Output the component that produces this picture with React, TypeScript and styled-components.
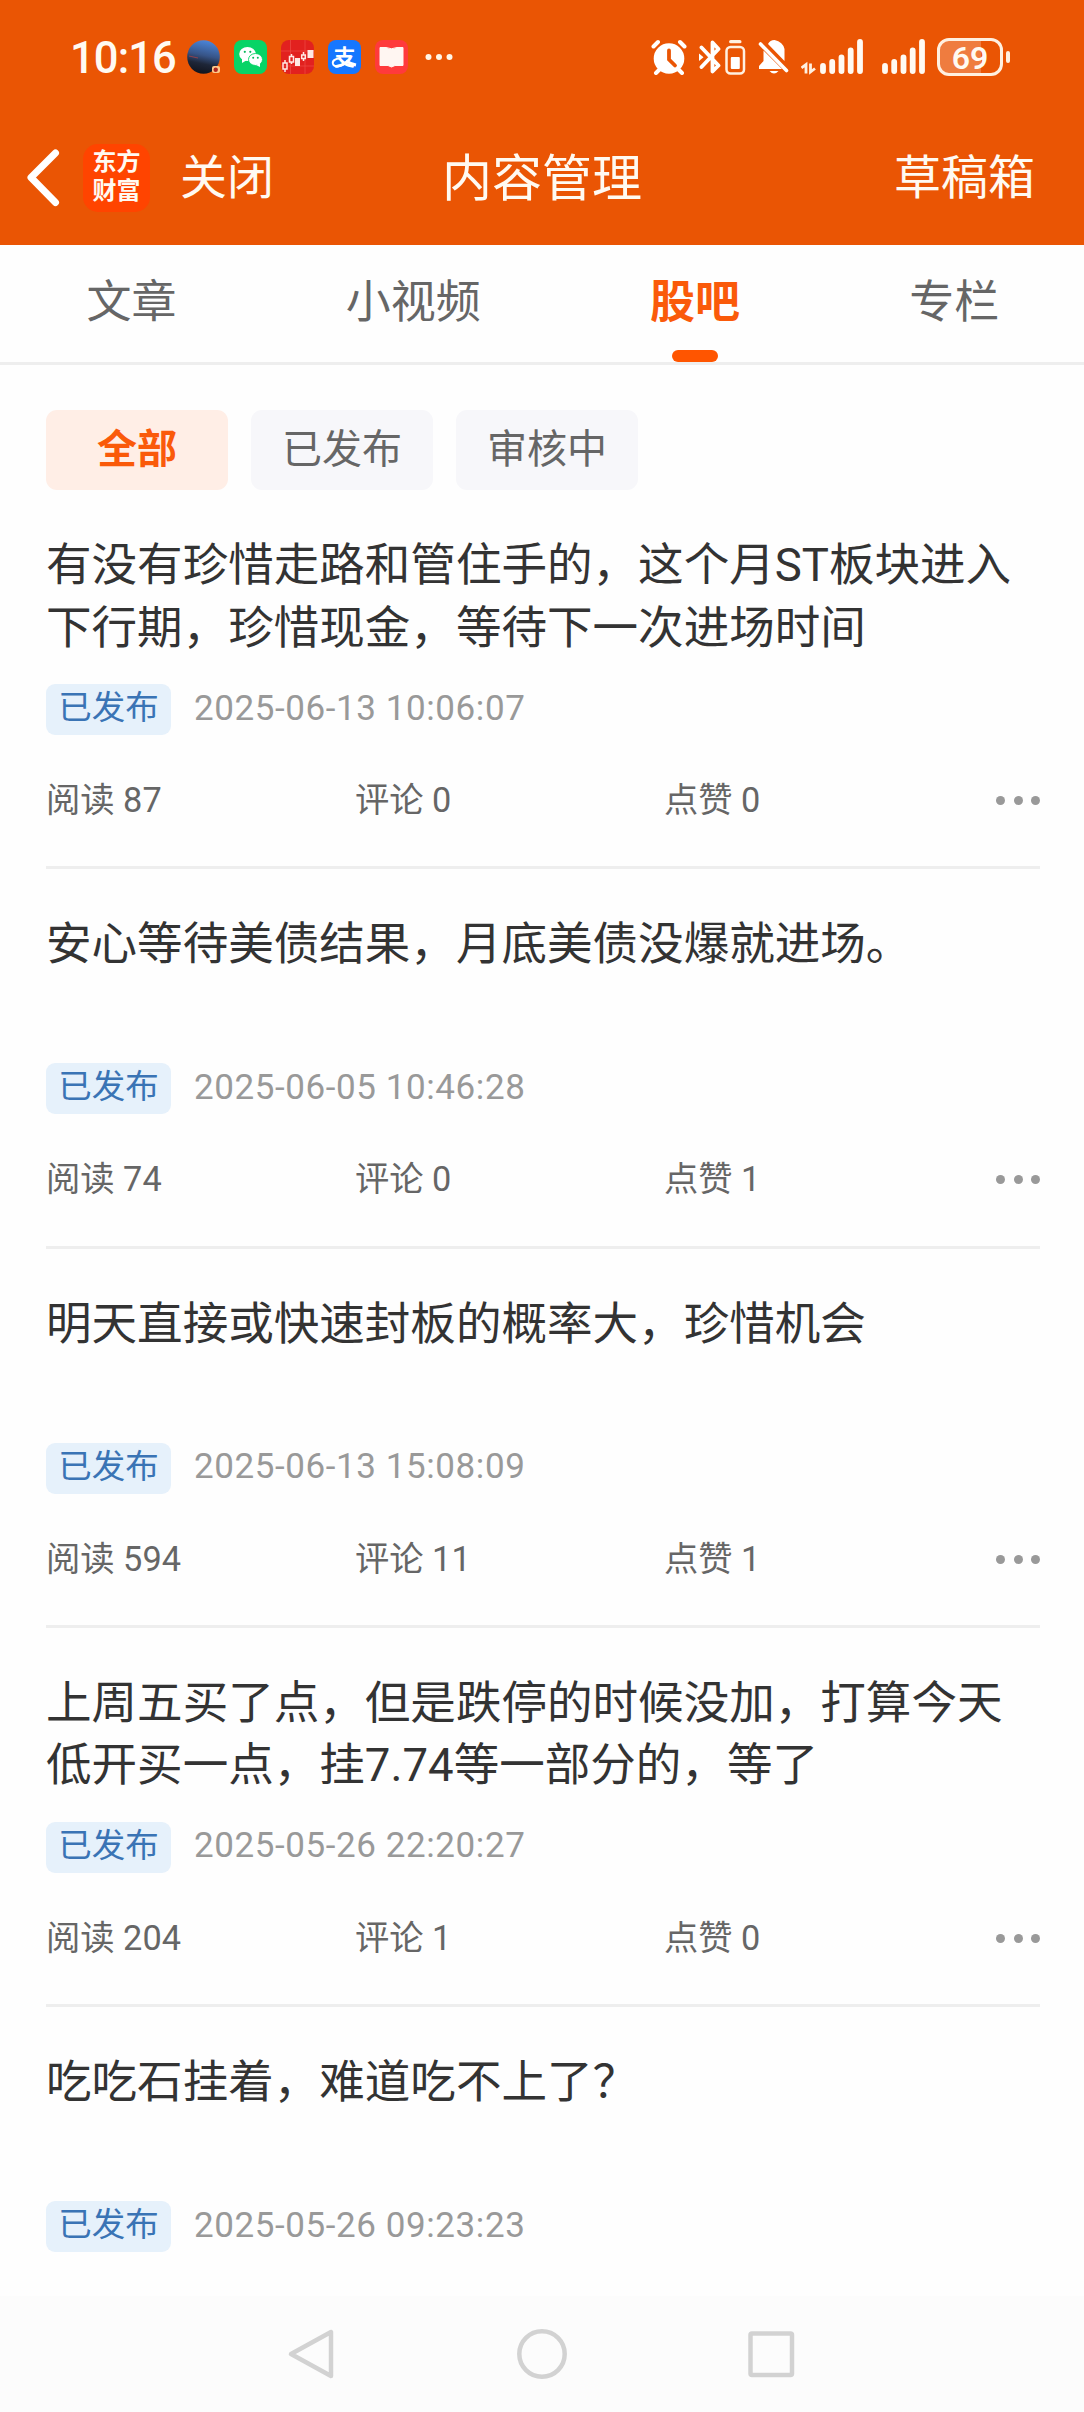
import React from 'react';
import styled, { createGlobalStyle } from 'styled-components';

const Global = createGlobalStyle`
  * { box-sizing: border-box; }
  body { margin: 0; background: #fefefe; font-family: Roboto, "Noto Sans CJK SC", sans-serif; }
`;

const Screen = styled.div`
  width: 1084px;
  height: 2412px;
  display: flex;
  flex-direction: column;
  overflow: hidden;
  background: #fefefe;
`;

const Top = styled.header`
  height: 245px;
  flex: none;
  background: #ea5504;
  color: #fffaf2;
`;

const StatusBar = styled.div`
  height: 110px;
  padding: 3px 74px 0 70px;
  display: flex;
  align-items: center;
  justify-content: space-between;
`;

const StatusSide = styled.div`
  display: flex;
  align-items: center;
`;

const Clock = styled.span`
  width: 117px;
  padding-top: 3px;
  font-size: 43.5px;
  font-weight: 500;
  letter-spacing: -0.9px;
  white-space: nowrap;
`;

const Icon = styled.svg<{ $gap?: number }>`
  display: block;
  flex: none;
  margin-left: ${(p) => p.$gap ?? 0}px;
`;

const Battery = styled.span`
  width: 66px;
  height: 38px;
  margin-left: 12px;
  border: 3px solid #fff0e0;
  border-radius: 12px;
  background: linear-gradient(90deg, #ef7c3f 68%, transparent 68%);
  font-size: 32px;
  font-weight: 600;
  line-height: 34px;
  text-align: center;
`;

const BatteryTip = styled.span`
  width: 4px;
  height: 12px;
  margin-left: 3px;
  border-radius: 2px;
  background: #fff0e0;
`;

const NavBar = styled.div`
  height: 135px;
  padding: 0 49px 0 26px;
  display: grid;
  grid-template-columns: 1fr auto 1fr;
  align-items: center;
`;

const NavLeft = styled.div`
  display: flex;
  align-items: center;
`;

const AppLogo = styled.span`
  width: 67px;
  height: 68px;
  margin: 0 30px 0 23px;
  padding-top: 4px;
  border-radius: 15px;
  background: #ff4400;
  font-size: 24px;
  font-weight: 700;
  line-height: 29.5px;
  text-align: center;
`;

const NavText = styled.span`
  padding-top: 1px;
  font-size: 47px;
  line-height: 60px;
  white-space: nowrap;
`;

const NavTitle = styled.h1`
  margin: 0 0 0 23px;
  padding-top: 2px;
  font-size: 50px;
  font-weight: 400;
  line-height: 60px;
`;

const NavRight = styled(NavText)`
  justify-self: end;
`;

const Tabs = styled.nav`
  height: 120px;
  flex: none;
  display: flex;
  justify-content: space-around;
  padding-left: 2px;
  border-bottom: 3px solid #eeeeee;
`;

const Tab = styled.div<{ $active?: boolean }>`
  display: flex;
  flex-direction: column;
  align-items: center;
  justify-content: space-between;
  padding-top: 28px;
  font-size: 45px;
  line-height: 60px;
  font-weight: ${(p) => (p.$active ? 700 : 400)};
  color: ${(p) => (p.$active ? '#fa5a0a' : '#666')};
`;

const TabMark = styled.span`
  width: 46px;
  height: 12px;
  border-radius: 6px;
  background: #ff5500;
`;

const Filters = styled.div`
  display: flex;
  gap: 23px;
  padding: 45px 46px 0;
`;

const Pill = styled.div<{ $active?: boolean }>`
  width: 182px;
  height: 80px;
  border-radius: 11px;
  font-size: 40px;
  line-height: 80px;
  text-align: center;
  font-weight: ${(p) => (p.$active ? 700 : 400)};
  color: ${(p) => (p.$active ? '#fa5a0a' : '#666')};
  background: ${(p) => (p.$active ? '#ffeee6' : '#f7f7fa')};
`;

const List = styled.main`
  flex: 1;
  min-height: 0;
  padding: 0 44px 0 46px;
`;

const Post = styled.article<{ $last?: boolean }>`
  height: ${(p) => (p.$last ? 288 : 379.33)}px;
  padding-top: 45px;
  display: flex;
  flex-direction: column;
  border-bottom: ${(p) => (p.$last ? 'none' : '3px solid #eeeeee')};
`;

const PostTitle = styled.h2`
  margin: 0 0 24px;
  height: 125px;
  font-size: 45.55px;
  font-weight: 400;
  line-height: 62.5px;
  color: #333;
  white-space: nowrap;
`;

const Meta = styled.div`
  display: flex;
  align-items: center;
  gap: 23px;
`;

const Tag = styled.span`
  width: 125px;
  height: 51px;
  border-radius: 9px;
  background: #e6f1fb;
  color: #3a74b5;
  font-size: 33.5px;
  line-height: 48px;
  text-align: center;
`;

const Time = styled.time`
  font-size: 35px;
  line-height: 46px;
  padding-bottom: 2px;
  letter-spacing: 0.58px;
  color: #999;
  white-space: nowrap;
`;

const Stats = styled.div`
  display: flex;
  align-items: center;
  margin-top: 41px;
  height: 48px;
`;

const Stat = styled.span`
  width: 309px;
  font-size: 34.3px;
  line-height: 48px;
  color: #666;
  white-space: nowrap;
`;

const More = styled.span`
  display: flex;
  gap: 8.5px;
  margin-left: auto;
  margin-top: 1px;
`;

const MoreDot = styled.i`
  width: 9px;
  height: 9px;
  border-radius: 50%;
  background: #999;
`;

const SystemNav = styled.footer`
  height: 116px;
  flex: none;
  background: #fcfcfc;
  display: flex;
  align-items: center;
  justify-content: center;
  gap: 178px;
`;

interface PostData {
  title: string[];
  time: string;
  stats?: [number, number, number];
}

const posts: PostData[] = [
  { title: ['有没有珍惜走路和管住手的，这个月ST板块进入', '下行期，珍惜现金，等待下一次进场时间'], time: '2025-06-13 10:06:07', stats: [87, 0, 0] },
  { title: ['安心等待美债结果，月底美债没爆就进场。'], time: '2025-06-05 10:46:28', stats: [74, 0, 1] },
  { title: ['明天直接或快速封板的概率大，珍惜机会'], time: '2025-06-13 15:08:09', stats: [594, 11, 1] },
  { title: ['上周五买了点，但是跌停的时候没加，打算今天', '低开买一点，挂7.74等一部分的，等了'], time: '2025-05-26 22:20:27', stats: [204, 1, 0] },
  { title: ['吃吃石挂着，难道吃不上了？'], time: '2025-05-26 09:23:23' },
];

function AppIcons() {
  return (
    <>
      <Icon width="33" height="34" viewBox="0 0 33 34">
        <defs>
          <linearGradient id="sky" x1="0.6" y1="0" x2="0.4" y2="1">
            <stop offset="0" stopColor="#4c86da" />
            <stop offset="0.45" stopColor="#375487" />
            <stop offset="0.7" stopColor="#1e2638" />
            <stop offset="1" stopColor="#11131c" />
          </linearGradient>
        </defs>
        <ellipse cx="16.5" cy="17" rx="16.3" ry="16.8" fill="url(#sky)" />
        <path d="M2 16l9 2" stroke="#8a4150" strokeWidth="1.2" />
        <rect x="25" y="26" width="8" height="7" rx="2" fill="#ffc98a" />
        <circle cx="28.700" cy="29.700" r="2.200" fill="#b3261e" />
      </Icon>
      <Icon $gap={14} width="33" height="34" viewBox="0 0 33 34">
        <rect width="33" height="34" rx="8" fill="#07d466" />
        <ellipse cx="13.5" cy="14" rx="8.300" ry="7" fill="#fff" />
        <path d="M8 18v5l5-3z" fill="#fff" />
        <ellipse cx="21.500" cy="19.500" rx="7" ry="6" fill="#fff" stroke="#07d466" strokeWidth="0.900" />
        <path d="M22 25l4 2v-4z" fill="#fff" />
        <g fill="#07b85a">
          <circle cx="10.800" cy="11.800" r="1.100" /><circle cx="16.300" cy="11.800" r="1.100" />
          <circle cx="19.200" cy="17.800" r="1" /><circle cx="23.800" cy="17.800" r="1" />
        </g>
      </Icon>
      <Icon $gap={14} width="33" height="34" viewBox="0 0 33 34">
        <rect width="33" height="34" rx="8" fill="#e2211f" />
        <path d="M9.500 0v34M24 0v34M0 11h33M0 26h33" stroke="#ee4c46" strokeWidth="0.700" />
        <g stroke="#ffe9e4" strokeWidth="1.500" fill="none">
          <path d="M4 20v3M4 29v3M10.500 14v3M10.500 22v2M22.500 12v3M22.500 18v3" />
          <rect x="2" y="23" width="4" height="6" />
          <rect x="8.500" y="16.500" width="4" height="5.500" />
          <rect x="20.700" y="15" width="3.600" height="3.500" />
        </g>
        <path d="M14 18h5v8h-5zM26.500 10h6v8h-6z" fill="#ffe9e4" />
      </Icon>
      <Icon $gap={14} width="33" height="34" viewBox="0 0 33 34">
        <rect width="33" height="34" rx="8" fill="#1677ff" />
        <text x="16.500" y="25" textAnchor="middle" fontSize="22" fontWeight="700" fill="#fff">支</text>
        <path d="M12 18.500c-5 0-8 2.500-7 5.500 1.500 4 9 3 13-2" stroke="#fff" strokeWidth="2" fill="none" />
        <path d="M18 21q5 3 10 4" stroke="#fff" strokeWidth="3" fill="none" />
      </Icon>
      <Icon $gap={14} width="33" height="34" viewBox="0 0 33 34">
        <rect width="33" height="34" rx="8" fill="#ff3a3c" />
        <path d="M5 7.500h6q5.500 2.500 11 0h6v18h-8l-3.500 1.500-3.500-1.500H5z" fill="#fff6f2" stroke="#fff6f2" strokeLinejoin="round" />
      </Icon>
      <Icon $gap={17} width="28" height="8" viewBox="0 0 28 8">
        <circle cx="3.500" cy="4" r="3" fill="#fff6e8" />
        <circle cx="14" cy="4" r="3" fill="#fff6e8" />
        <circle cx="24.500" cy="4" r="3" fill="#fff6e8" />
      </Icon>
    </>
  );
}

function StatusIcons() {
  return (
    <>
      <Icon width="36" height="36" viewBox="0 0 36 36">
        <circle cx="18" cy="19.500" r="15.300" fill="#fff" />
        <path d="M2.500 7.500L7 3M33.500 7.500L29 3M8 31l-3 3M28 31l3 3" stroke="#fff" strokeWidth="4" strokeLinecap="round" />
        <path d="M18 11.500v9l6 6" stroke="#ea5504" strokeWidth="3.800" fill="none" strokeLinecap="round" />
      </Icon>
      <Icon $gap={12} width="47" height="36" viewBox="0 0 47 36">
        <path d="M2.500 8.500L19.500 26.500L13.500 32.500V3.500L19.500 10L2.500 28" stroke="#fff" strokeWidth="3.800" fill="none" strokeLinejoin="round" strokeLinecap="round" />
        <path d="M0 14.500l4.500 3.700-4.500 3.700z" fill="#fff" />
        <rect x="27.500" y="8" width="17.500" height="26.500" rx="4" fill="none" stroke="#fff0e0" strokeWidth="2.500" />
        <path d="M31.700 2.700h9.200" stroke="#fff0e0" strokeWidth="3.200" strokeLinecap="round" />
        <rect x="31.800" y="18" width="9" height="12" rx="1" fill="#fff" />
      </Icon>
      <Icon $gap={12} width="31" height="36" viewBox="0 0 31 36">
        <path d="M5.500 11.500L24 30H1v-3l4.500-5zM10 5q2-4 6.500-4 8.500 2 10 9v12zM11.500 32h9q-4.500 5-9 0z" fill="#fff" />
        <path d="M2.500 5L28.500 31.500" stroke="#fff" strokeWidth="3.600" strokeLinecap="round" />
      </Icon>
      <Icon $gap={12} width="62" height="36" viewBox="0 0 62 36">
        <path d="M0.500 29L5 25.500V34.500M9.500 24.500V33L14 29.500" fill="none" stroke="#fff0e0" strokeWidth="2.800" />
        <path d="M22 27v5M31.200 23v9M40.500 18.500v13.500M49.700 11.500v20.500M59 3v29" stroke="#fffaf2" strokeWidth="5.800" strokeLinecap="round" />
      </Icon>
      <Icon $gap={19} width="43" height="36" viewBox="0 0 43 36">
        <path d="M3 27v5M12.200 23v9M21.500 18.500v13.500M30.700 11.500v20.500M40 3v29" stroke="#fffaf2" strokeWidth="5.800" strokeLinecap="round" />
      </Icon>
      <Battery>69</Battery>
      <BatteryTip />
    </>
  );
}

export default function App() {
  return (
    <Screen>
      <Global />
      <Top>
        <StatusBar>
          <StatusSide>
            <Clock>10:16</Clock>
            <AppIcons />
          </StatusSide>
          <StatusSide>
            <StatusIcons />
          </StatusSide>
        </StatusBar>
        <NavBar>
          <NavLeft>
            <Icon width="34" height="60" viewBox="0 0 34 60">
              <path d="M29.500 5L5 29.500l24.500 25" fill="none" stroke="#fff" strokeWidth="7" strokeLinecap="round" strokeLinejoin="round" />
            </Icon>
            <AppLogo>东方<br />财富</AppLogo>
            <NavText>关闭</NavText>
          </NavLeft>
          <NavTitle>内容管理</NavTitle>
          <NavRight>草稿箱</NavRight>
        </NavBar>
      </Top>
      <Tabs>
        <Tab>文章</Tab>
        <Tab>小视频</Tab>
        <Tab $active>股吧<TabMark /></Tab>
        <Tab>专栏</Tab>
      </Tabs>
      <Filters>
        <Pill $active>全部</Pill>
        <Pill>已发布</Pill>
        <Pill>审核中</Pill>
      </Filters>
      <List>
        {posts.map((p) => (
          <Post key={p.time} $last={!p.stats}>
            <PostTitle>
              {p.title.map((line, i) => (
                <React.Fragment key={line}>{i > 0 && <br />}{line}</React.Fragment>
              ))}
            </PostTitle>
            <Meta>
              <Tag>已发布</Tag>
              <Time>{p.time}</Time>
            </Meta>
            {p.stats && (
              <Stats>
                <Stat>阅读 {p.stats[0]}</Stat>
                <Stat>评论 {p.stats[1]}</Stat>
                <Stat>点赞 {p.stats[2]}</Stat>
                <More><MoreDot /><MoreDot /><MoreDot /></More>
              </Stats>
            )}
          </Post>
        ))}
      </List>
      <SystemNav>
        <Icon width="50" height="54" viewBox="0 0 50 54">
          <path d="M44 5v44L4 27z" fill="none" stroke="#d2d2d2" strokeWidth="4.500" strokeLinejoin="round" />
        </Icon>
        <Icon width="54" height="54" viewBox="0 0 54 54">
          <circle cx="27" cy="27" r="22.700" fill="none" stroke="#d2d2d2" strokeWidth="4.500" />
        </Icon>
        <Icon width="50" height="54" viewBox="0 0 50 54">
          <rect x="3.500" y="6.500" width="41.500" height="41.500" rx="1.500" fill="none" stroke="#d2d2d2" strokeWidth="4.500" />
        </Icon>
      </SystemNav>
    </Screen>
  );
}
